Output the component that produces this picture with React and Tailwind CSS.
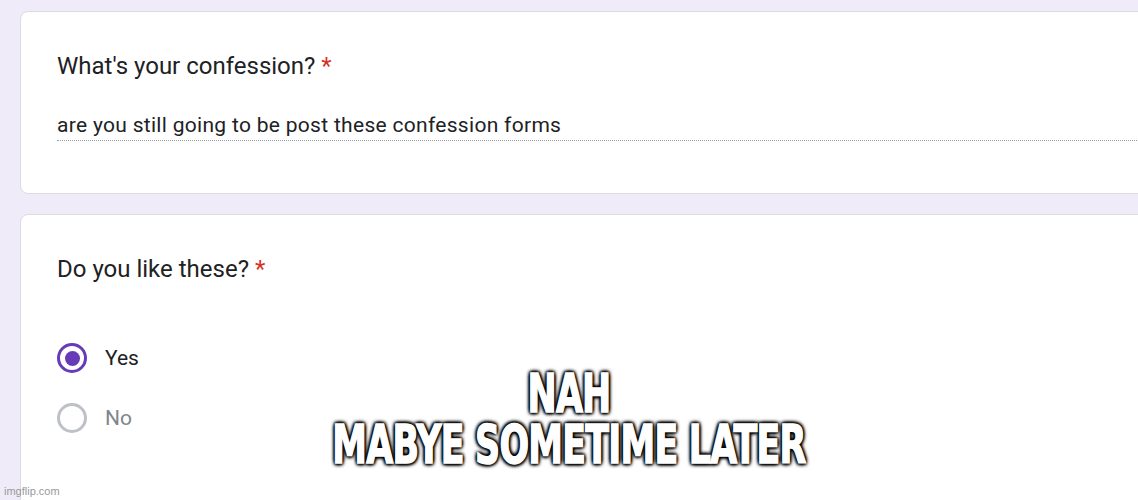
import React from "react";

function Radio({ checked }) {
  return checked ? (
    <div className="w-[30px] h-[30px] rounded-full border-[3px] border-[#673ab7] flex items-center justify-center">
      <div className="w-[15px] h-[15px] rounded-full bg-[#673ab7]" />
    </div>
  ) : (
    <div className="w-[30px] h-[30px] rounded-full border-[3px] border-[#bdc1c6]" />
  );
}

export default function App() {
  return (
    <div className="relative w-[1138px] h-[500px] overflow-hidden bg-[#f0ebf8] font-['Roboto',sans-serif]">
      <div className="pt-[11px] pl-[20px] flex flex-col gap-[20px] w-[1180px]">
        <div className="h-[183px] bg-white border border-[#dadce0] rounded-[8px] pl-[36px] pt-[40px]">
          <div className="text-[24px] leading-[28px] text-[#202124]">
            What's your confession? <span className="text-[#d93025]">*</span>
          </div>
          <div className="mt-[31px] text-[21px] leading-[28px] tracking-[0.3px] text-[#202124] pb-[1px] border-b border-dotted border-[#9aa0a6]">
            are you still going to be post these confession forms
          </div>
        </div>
        <div className="h-[320px] bg-white border border-[#dadce0] rounded-[8px] pl-[36px] pt-[40px]">
          <div className="text-[24px] leading-[28px] text-[#202124]">
            Do you like these? <span className="text-[#d93025]">*</span>
          </div>
          <div className="mt-[60px] flex flex-col gap-[30px]">
            <div className="flex items-center gap-[18px]">
              <Radio checked />
              <span className="text-[21px] leading-[30px] text-[#202124]">Yes</span>
            </div>
            <div className="flex items-center gap-[18px]">
              <Radio />
              <span className="text-[21px] leading-[30px] text-[#80868b]">No</span>
            </div>
          </div>
        </div>
      </div>
      <div className="absolute left-[4px] top-[484px] text-[11px] leading-[14px] text-[#999999] font-['Liberation_Sans',sans-serif]">
        imgflip.com
      </div>
      <div className="absolute left-0 right-0 top-[368px] flex flex-col items-center text-white font-['DejaVu_Sans_Condensed','DejaVu_Sans',sans-serif] font-bold text-[53px] leading-[51px] tracking-[-1px] scale-x-[0.73] [-webkit-text-stroke:1.5px_#fff] [text-shadow:0_0_3px_#000,0_0_3px_#000,0_0_4px_#000,2px_2px_4px_#000,-2px_-2px_4px_#000,2px_-2px_4px_#000,-2px_2px_4px_#000]">
        <div>NAH</div>
        <div>MABYE SOMETIME LATER</div>
      </div>
    </div>
  );
}
